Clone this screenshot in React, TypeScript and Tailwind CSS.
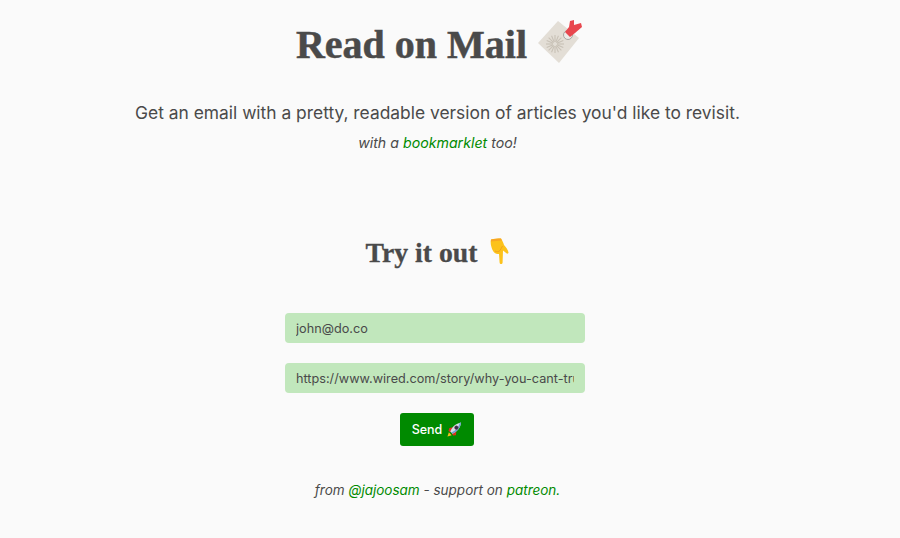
function TagIcon({ className }: { className?: string }) {
  const rays = Array.from({ length: 16 }, (_, i) => (i * 360) / 16);
  return (
    <svg viewBox="1 0 42 46" className={className}>
      <path d="M22 3 L43 20 L23 45 L2 25 Z" fill="#e3ded6" />
      {rays.map((r) => (
        <line key={r} x1="19" y1="17" x2="19" y2="24" transform={`rotate(${r} 19 26)`} stroke="#c8c1b6" strokeWidth="1.1" />
      ))}
      <circle cx="32" cy="17" r="4.5" fill="#ecebe8" stroke="#a9a6a2" strokeWidth="1" />
      <path d="M29 14 L33 9 L34 3 L38 2 L38 7 L45 5 L46 9 L39 15 L34 19 Z" fill="#e8474e" />
    </svg>
  );
}

function PointDownIcon({ className }: { className?: string }) {
  return (
    <svg viewBox="0 0 20 27" className={className}>
      <path d="M2 1.5 C5 0.5 9 0.5 12 0.5 C13.5 3 14.5 5 15 7 C17 9 19 12 19.5 14.5 C19.5 16 17.5 16 16.5 14.5 L14 12.5 L13.6 24.5 C13.4 26.5 10.8 26.5 10.6 24.5 L10 16 C7 16.5 5 15 3.5 12 C2 8.5 1.2 5 2 1.5 Z" fill="#fcc21b" />
      <path d="M2 1.5 C5 0.5 9 0.5 12 0.5 L12.8 2.5 C9 3 5 3 1.9 3.5 Z" fill="#f8a623" />
      <path d="M6 13 C8 14 9.5 14 11 12.5 L13.5 8" stroke="#ee9a1e" strokeWidth="0.8" fill="none" />
    </svg>
  );
}

function RocketIcon({ className }: { className?: string }) {
  return (
    <svg viewBox="0 0 16 16" className={className}>
      <path d="M0.5 15.5 L2 11 L5 14 Z" fill="#f7c21f" />
      <path d="M2.5 6.5 L6.5 5.5 L4 11 L1.5 9.5 Z" fill="#e0301e" />
      <path d="M10 9.5 L9.5 14 L6.5 14.5 L5 12 Z" fill="#e0301e" />
      <path d="M3.5 10 C5.5 5 9.5 1.5 15 0.5 C14.5 6 11 10 6 12.5 Z" fill="#d4dfe9" />
      <path d="M6 12.5 C11 10 14.5 6 15 0.5 L13.5 1 C12.5 5.5 9.5 9 4.8 11.3 Z" fill="#6f9fd0" />
      <circle cx="10" cy="6" r="1.9" fill="#2a3350" stroke="#8c2a2a" strokeWidth="0.5" />
    </svg>
  );
}

export default function App() {
  return (
    <div className="h-[538px] overflow-hidden bg-[#fafafa] font-['Inter',sans-serif] text-[#4a4a4a]">
      <div className="flex w-[875px] flex-col items-center">
        <h1 className="mt-[15px] flex h-[60px] items-center font-['Liberation_Serif',serif] text-[40px] font-bold leading-[60px] [-webkit-text-stroke:0.5px_#4a4a4a]">
          Read on Mail
          <TagIcon className="ml-[10px] h-[46px] w-[42px] -translate-y-[4px] overflow-visible" />
        </h1>
        <p className="mt-[24px] text-[17.4px] leading-[28px]">
          Get an email with a pretty, readable version of articles you'd like to revisit.
        </p>
        <p className="mt-[6px] text-[14.2px] italic leading-[20px]">
          with a <a className="text-[#008a00]">bookmarklet</a> too!
        </p>
        <h2 className="mt-[80px] flex h-[40px] items-center font-['Liberation_Serif',serif] text-[27.7px] font-bold [-webkit-text-stroke:0.3px_#4a4a4a]">
          Try it out
          <PointDownIcon className="ml-[12px] h-[27px] w-[20px] -translate-y-[2px]" />
        </h2>
        <input
          readOnly
          value="john@do.co"
          className="mt-[40px] mr-[5px] h-[30px] w-[300px] rounded-[4px] bg-[#c1e7bc] px-[11px] text-[12.7px] text-[#4a4a4a] outline-none"
        />
        <input
          readOnly
          value="https://www.wired.com/story/why-you-cant-trust-anything"
          className="mt-[20px] mr-[5px] h-[30px] w-[300px] rounded-[4px] bg-[#c1e7bc] px-[11px] text-[12.7px] text-[#4a4a4a] outline-none"
        />
        <button className="mt-[20px] mr-[1px] flex h-[33px] w-[74px] items-center justify-center gap-[5px] rounded-[3px] bg-[#008a00] pt-[2px] text-[12.5px] font-medium text-white">
          Send
          <RocketIcon className="-mt-[2px] h-[15px] w-[15px]" />
        </button>
        <p className="mt-[34px] text-[13.5px] italic leading-[20px]">
          from <a className="text-[#008a00]">@jajoosam</a> - support on <a className="text-[#008a00]">patreon.</a>
        </p>
      </div>
    </div>
  );
}
